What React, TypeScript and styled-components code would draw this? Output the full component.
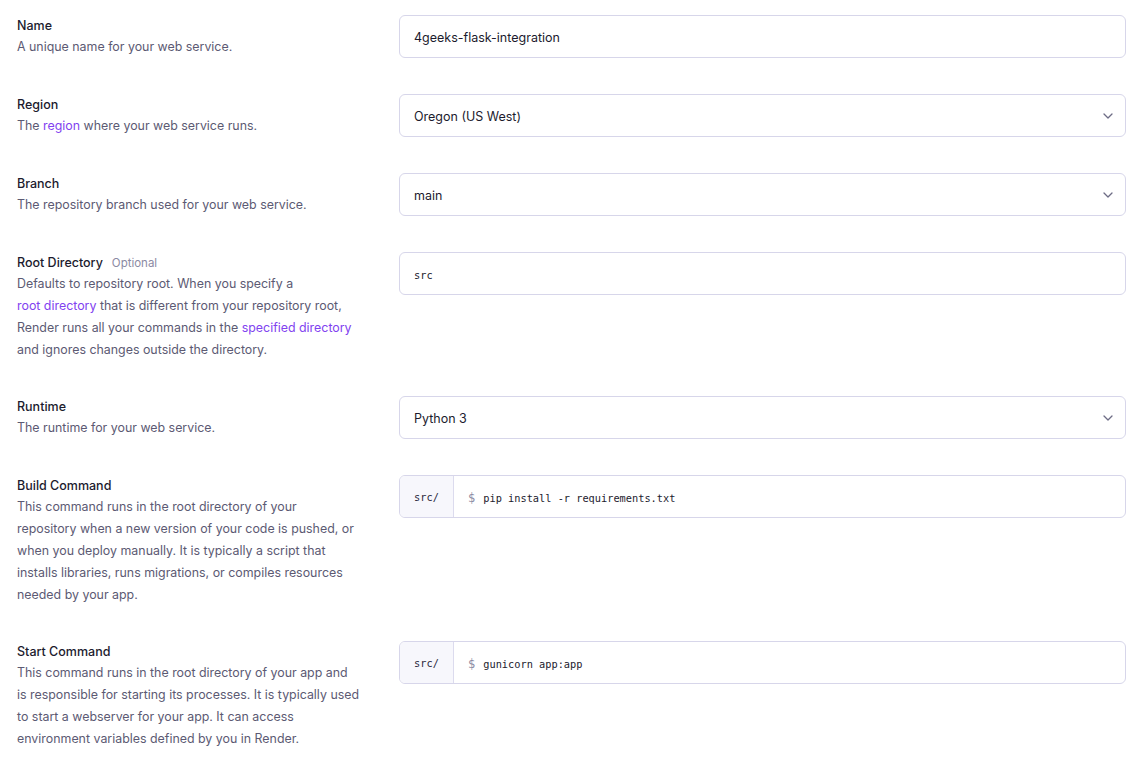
import React from "react";
import styled, { createGlobalStyle } from "styled-components";

const Global = createGlobalStyle`
  html, body { margin: 0; padding: 0; background: #ffffff; }
  body { font-family: Inter, "Noto Sans", sans-serif; -webkit-font-smoothing: antialiased; }
`;

const Page = styled.div`
  padding: 15px 13px 20px 17px;
  display: flex;
  flex-direction: column;
  gap: 36px;
`;

const Row = styled.div`
  display: grid;
  grid-template-columns: 382px 1fr;
  align-items: start;
`;

const Info = styled.div`
  display: flex;
  flex-direction: column;
`;

const Label = styled.div`
  height: 21px;
  padding-top: 1px;
  box-sizing: border-box;
  font-size: 12.5px;
  line-height: 20px;
  font-weight: 500;
  color: #1c1b2e;
  display: flex;
  gap: 9px;
  align-items: baseline;
`;

const Optional = styled.span`
  font-size: 11.5px;
  font-weight: 400;
  color: #8b8aa3;
`;

const Desc = styled.div`
  font-size: 12.4px;
  line-height: 22px;
  color: #5c5a73;
  white-space: nowrap;
  margin-bottom: -1px;
`;

const Link = styled.a`
  color: #8142f0;
  text-decoration: none;
`;

const Field = styled.div`
  height: 43px;
  box-sizing: border-box;
  border: 1px solid #d7d6ea;
  border-radius: 6px;
  display: flex;
  align-items: stretch;
  background: #ffffff;
  overflow: hidden;
`;

const Value = styled.div<{ $mono?: boolean }>`
  flex: 1;
  display: flex;
  align-items: center;
  padding: 2px 14px 0 14px;
  color: #1c1b2e;
  font-family: ${(p) => (p.$mono ? '"DejaVu Sans Mono", monospace' : 'Inter, "Noto Sans", sans-serif')};
  font-size: ${(p) => (p.$mono ? "10.3px" : "12.5px")};
`;

const Chevron = styled.div`
  width: 34px;
  display: flex;
  align-items: center;
  justify-content: center;
  color: #6d6c85;
`;

const Prefix = styled.div`
  width: 53px;
  padding-top: 1px;
  background: #f7f7fc;
  border-right: 1px solid #dcdbee;
  display: flex;
  align-items: center;
  justify-content: center;
  font-family: "DejaVu Sans Mono", monospace;
  font-size: 10.3px;
  color: #2a2940;
`;

const Dollar = styled.span`
  color: #8c8ba3;
  margin-right: 8px;
  font-size: 12px;
`;

const ChevronIcon = () => (
  <svg width="10" height="6" viewBox="0 0 10 6" fill="none">
    <path d="M1 1l4 4 4-4" stroke="currentColor" strokeWidth="1.3" strokeLinecap="round" strokeLinejoin="round" />
  </svg>
);

const Select = ({ value }: { value: string }) => (
  <Field>
    <Value>{value}</Value>
    <Chevron>
      <ChevronIcon />
    </Chevron>
  </Field>
);

const Command = ({ cmd }: { cmd: string }) => (
  <Field>
    <Prefix>src/</Prefix>
    <Value $mono>
      <Dollar>$</Dollar>
      {cmd}
    </Value>
  </Field>
);

export default function App() {
  return (
    <>
      <Global />
      <Page>
        <Row>
          <Info>
            <Label>Name</Label>
            <Desc>A unique name for your web service.</Desc>
          </Info>
          <Field>
            <Value>4geeks-flask-integration</Value>
          </Field>
        </Row>
        <Row>
          <Info>
            <Label>Region</Label>
            <Desc>
              The <Link>region</Link> where your web service runs.
            </Desc>
          </Info>
          <Select value="Oregon (US West)" />
        </Row>
        <Row>
          <Info>
            <Label>Branch</Label>
            <Desc>The repository branch used for your web service.</Desc>
          </Info>
          <Select value="main" />
        </Row>
        <Row>
          <Info>
            <Label>
              Root Directory <Optional>Optional</Optional>
            </Label>
            <Desc>
              Defaults to repository root. When you specify a
              <br />
              <Link>root directory</Link> that is different from your repository root,
              <br />
              Render runs all your commands in the <Link>specified directory</Link>
              <br />
              and ignores changes outside the directory.
            </Desc>
          </Info>
          <Field>
            <Value $mono>src</Value>
          </Field>
        </Row>
        <Row>
          <Info>
            <Label>Runtime</Label>
            <Desc>The runtime for your web service.</Desc>
          </Info>
          <Select value="Python 3" />
        </Row>
        <Row>
          <Info>
            <Label>Build Command</Label>
            <Desc>
              This command runs in the root directory of your
              <br />
              repository when a new version of your code is pushed, or
              <br />
              when you deploy manually. It is typically a script that
              <br />
              installs libraries, runs migrations, or compiles resources
              <br />
              needed by your app.
            </Desc>
          </Info>
          <Command cmd="pip install -r requirements.txt" />
        </Row>
        <Row>
          <Info>
            <Label>Start Command</Label>
            <Desc>
              This command runs in the root directory of your app and
              <br />
              is responsible for starting its processes. It is typically used
              <br />
              to start a webserver for your app. It can access
              <br />
              environment variables defined by you in Render.
            </Desc>
          </Info>
          <Command cmd="gunicorn app:app" />
        </Row>
      </Page>
    </>
  );
}
